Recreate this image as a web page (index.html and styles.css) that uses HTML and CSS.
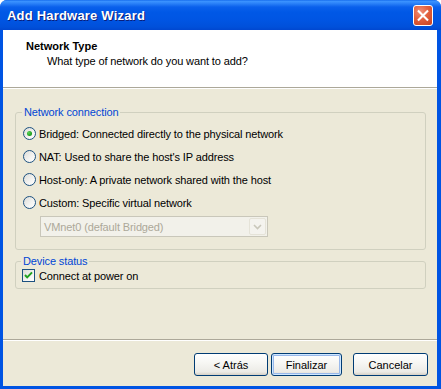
FILE: index.html
```html
<!DOCTYPE html>
<html>
<head>
<meta charset="utf-8">
<link rel="stylesheet" href="styles.css">
</head>
<body>
<div class="window">
  <div class="titlebar">
    <span class="title">Add Hardware Wizard</span>
    <span class="close">
      <svg width="21" height="21" viewBox="0 0 21 21"><path d="M6 6 L15 15 M15 6 L6 15" stroke="#fff" stroke-width="2.2" stroke-linecap="square"/></svg>
    </span>
  </div>
  <div class="frame">
    <div class="header">
      <div class="h-title">Network Type</div>
      <div class="h-sub">What type of network do you want to add?</div>
    </div>
    <div class="content">
      <fieldset class="group g1">
        <legend>Network connection</legend>
        <div class="row"><span class="radio on"></span><span>Bridged: Connected directly to the physical network</span></div>
        <div class="row"><span class="radio"></span><span>NAT: Used to share the host's IP address</span></div>
        <div class="row"><span class="radio"></span><span>Host-only: A private network shared with the host</span></div>
        <div class="row"><span class="radio"></span><span>Custom: Specific virtual network</span></div>
        <div class="select">
          <span class="sel-text">VMnet0 (default Bridged)</span>
          <span class="sel-btn"><svg width="9" height="6" viewBox="0 0 9 6"><path d="M1 1 L4.5 4.5 L8 1" fill="none" stroke="#C9C7BA" stroke-width="1.6"/></svg></span>
        </div>
      </fieldset>
      <fieldset class="group g2">
        <legend>Device status</legend>
        <div class="row crow"><span class="check"><svg width="13" height="13" viewBox="0 0 13 13"><path d="M3 6 L5.2 8.4 L10 3.4" fill="none" stroke="#21A121" stroke-width="2"/></svg></span><span>Connect at power on</span></div>
      </fieldset>
    </div>
    <div class="footer">
      <button class="btn">&lt; Atrás</button>
      <button class="btn default">Finalizar</button>
      <button class="btn cancel">Cancelar</button>
    </div>
  </div>
</div>
</body>
</html>
```
FILE: styles.css
```css
html, body { margin: 0; padding: 0; }
body {
  width: 441px; height: 389px; overflow: hidden;
  font-family: "Liberation Sans", Arial, sans-serif;
  font-size: 11px; color: #000;
  letter-spacing: -0.12px;
}
.window {
  width: 441px; height: 389px;
  display: flex; flex-direction: column;
  background: #0054E3;
  border-radius: 7px 7px 0 0;
  overflow: hidden;
}
.titlebar {
  height: 30px; flex: none;
  display: flex; align-items: center; justify-content: space-between;
  padding: 0 7px 0 7px;
  background: linear-gradient(to bottom, #0A5FE8 0px, #3D95FF 1px, #2F86FA 3px, #0A60EC 7px, #0058E6 12px, #0055E3 20px, #0050DA 27px, #0047D0 30px);
}
.title {
  font-family: "Liberation Sans", Arial, sans-serif;
  font-weight: bold; font-size: 13px; color: #fff;
  text-shadow: 1px 1px 0 #0A1E7A;
  letter-spacing: 0.2px;
}
.close {
  width: 20px; height: 21px; box-sizing: border-box;
  border: 1px solid #fff; border-radius: 3px;
  background: radial-gradient(circle at 35% 30%, #F0907A 0%, #E2603E 45%, #C8411E 100%);
  display: flex; align-items: center; justify-content: center;
  margin-top: 1px; margin-right: 1px;
}
.close svg { display: block; margin: -1px; }
.frame {
  flex: 1; display: flex; flex-direction: column;
  margin: 0 4px 3px 3px;
  background: #ECE9D8;
}
.header {
  height: 57px; flex: none;
  background: #fff;
  border-bottom: 1px solid #ACA899;
  box-shadow: 0 1px 0 #fff;
  box-sizing: content-box;
  padding: 0;
}
.h-title { font-weight: bold; padding: 10px 0 0 23px; line-height: 13px; letter-spacing: 0; }
.h-sub { padding: 2px 0 0 44px; line-height: 13px; }
.content {
  flex: 1;
  padding: 18px 11px 0 12px;
}
.group {
  margin: 0; padding: 3px 0 12px 7px;
  border: 1px solid #D0D0BF; border-radius: 3px;
  min-width: 0;
}
.group legend {
  color: #0046D5; padding: 0 2px; margin-left: -1px;
  line-height: 13px;
}
.g2 { margin-top: 5px; padding: 0 0 5px 6px; }
.row {
  height: 23px; display: flex; align-items: center; gap: 3px;
}
.crow { height: 15px; gap: 4px; }
.radio {
  width: 13px; height: 13px; box-sizing: border-box; flex: none;
  border: 1px solid #1C5180; border-radius: 50%;
  background: linear-gradient(135deg, #DCDCD7 0%, #F4F4F2 60%, #fff 100%);
  position: relative;
}
.radio.on::after {
  content: ""; position: absolute; left: 3px; top: 3px;
  width: 5px; height: 5px; border-radius: 50%;
  background: radial-gradient(circle at 35% 35%, #5BD35B 0%, #21A121 60%, #128A12 100%);
}
.check {
  width: 13px; height: 13px; box-sizing: border-box; flex: none;
  border: 1px solid #1C5180;
  background: linear-gradient(135deg, #DCDCD7 0%, #F4F4F2 60%, #fff 100%);
}
.check svg { display: block; margin: -1px; }
.select {
  margin: 2px 0 0 17px; width: 228px; height: 21px; box-sizing: border-box;
  border: 1px solid #C9C7BA; background: #F2F1EA;
  display: flex; align-items: center; justify-content: space-between;
}
.sel-text { color: #ACA899; padding-left: 3px; }
.sel-btn {
  width: 17px; height: 17px; margin-right: 1px;
  border: 1px solid #E5E3D8; box-sizing: border-box; border-radius: 2px;
  background: #F4F3EE;
  display: flex; align-items: center; justify-content: center;
}
.footer {
  flex: none;
  border-top: 1px solid #ACA899;
  box-shadow: inset 0 1px 0 #fff;
  display: flex; justify-content: flex-end; align-items: flex-start;
  padding: 13px 9px 10px 0;
}
.btn {
  width: 74px; height: 23px; box-sizing: border-box;
  font-family: "Liberation Sans", Arial, sans-serif; font-size: 11px; color: #000;
  border: 1px solid #003C74; border-radius: 3px;
  background: linear-gradient(to bottom, #FFFFFF 0%, #F7F7F4 40%, #ECEBE6 85%, #D6D0C5 100%);
  padding: 0; margin: 0;
}
.btn.default {
  margin-left: 3px; width: 71px;
  box-shadow: inset 0 0 0 1px #CEE7FF, inset 0 0 0 2px #98B8EA;
}
.btn.cancel { margin-left: 11px; width: 75px; }
```
